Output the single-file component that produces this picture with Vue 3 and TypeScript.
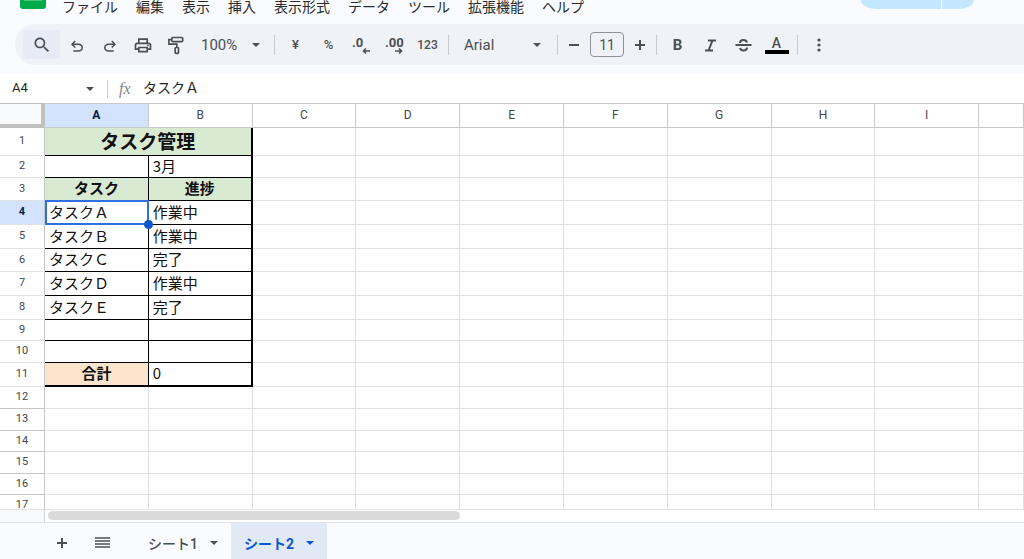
<script setup lang="ts">
import { ref } from 'vue'

interface SheetRow {
  height: number
  a?: string
  b?: string
  kind: 'title' | 'head' | 'body' | 'total' | 'plain'
}

const menus = ['ファイル', '編集', '表示', '挿入', '表示形式', 'データ', 'ツール', '拡張機能', 'ヘルプ']
const columns = ['A', 'B', 'C', 'D', 'E', 'F', 'G', 'H', 'I', '']

const rows: SheetRow[] = [
  { height: 28, a: 'タスク管理', kind: 'title' },
  { height: 22, b: '3月', kind: 'body' },
  { height: 23, a: 'タスク', b: '進捗', kind: 'head' },
  { height: 24, a: 'タスクＡ', b: '作業中', kind: 'body' },
  { height: 24, a: 'タスクＢ', b: '作業中', kind: 'body' },
  { height: 23, a: 'タスクＣ', b: '完了', kind: 'body' },
  { height: 24, a: 'タスクＤ', b: '作業中', kind: 'body' },
  { height: 24, a: 'タスクＥ', b: '完了', kind: 'body' },
  { height: 21, kind: 'body' },
  { height: 22, kind: 'body' },
  { height: 24, a: '合計', b: '0', kind: 'total' },
  { height: 22, kind: 'plain' },
  { height: 22, kind: 'plain' },
  { height: 21, kind: 'plain' },
  { height: 22, kind: 'plain' },
  { height: 21, kind: 'plain' },
  { height: 22, kind: 'plain' },
]

const selectedRow = 4
const cellName = ref('A4')
const formula = ref('タスクＡ')
const fontSize = ref('11')
</script>

<template>
  <div class="app">
    <header class="top">
      <div class="menubar">
        <div class="logo"><span class="logo-line"></span></div>
        <nav class="menus" aria-label="メニュー">
          <button v-for="m in menus" :key="m" type="button">{{ m }}</button>
        </nav>
        <div class="share">
          <button type="button" class="share-main" aria-label="共有"></button>
          <button type="button" class="share-more" aria-label="共有オプション"></button>
        </div>
      </div>

      <div class="toolbar" role="toolbar">
        <button type="button" class="search" aria-label="検索">
          <svg width="20" height="20" viewBox="0 0 24 24" fill="currentColor"><path d="M15.5 14h-.79l-.28-.27C15.41 12.59 16 11.11 16 9.5 16 5.91 13.09 3 9.5 3S3 5.91 3 9.5 5.91 16 9.5 16c1.61 0 3.09-.59 4.23-1.57l.27.28v.79l5 4.99L20.49 19l-4.99-5zm-6 0C7.01 14 5 11.99 5 9.5S7.01 5 9.5 5 14 7.01 14 9.5 11.99 14 9.5 14z" /></svg>
        </button>
        <button type="button" class="tool" aria-label="元に戻す">
          <svg width="18" height="18" viewBox="0 0 24 24" fill="currentColor"><path d="M7 21v-2h7.100q1.575 0 2.737-1T18 15.500t-1.163-2.500T14.100 12H7.800l2.600 2.600L9 16 4 11l5-5 1.400 1.400L7.800 10h6.300q2.425 0 4.163 1.575T20 15.500t-1.737 3.925T14.100 21z" /></svg>
        </button>
        <button type="button" class="tool" aria-label="やり直す">
          <svg width="18" height="18" viewBox="0 0 24 24" fill="currentColor"><path d="M17 21v-2H9.900q-1.575 0-2.737-1T6 15.500t1.163-2.500T9.900 12h6.300l-2.600 2.600L15 16l5-5-5-5-1.400 1.400L16.200 10H9.900q-2.425 0-4.163 1.575T4 15.500t1.737 3.925T9.900 21z" /></svg>
        </button>
        <button type="button" class="tool" aria-label="印刷">
          <svg width="20" height="20" viewBox="0 0 24 24" fill="currentColor"><path d="M19 9h-1V4H6v5H5c-1.660 0-3 1.340-3 3v6h4v3h12v-3h4v-6c0-1.660-1.340-3-3-3zM8 6h8v3H8V6zm8 13H8v-3h8v3zm2-3v-2H6v2H4v-4c0-.55.45-1 1-1h14c.55 0 1 .45 1 1v4h-2z" /><circle cx="18" cy="12.500" r="1" /></svg>
        </button>
        <button type="button" class="tool" aria-label="書式を貼り付け">
          <svg width="20" height="20" viewBox="0 0 24 24" fill="none" stroke="currentColor" stroke-width="2"><rect x="7" y="3" width="13" height="5" rx="1" /><path d="M7 5.500H3.500v5.500H13v4" /><rect x="11" y="15" width="4" height="7" rx="1" /></svg>
        </button>
        <label class="drop zoom">
          <select aria-label="ズーム"><option>100%</option></select>
          <svg width="8" height="4" viewBox="0 0 8 4"><path d="M0 0h8L4 4z" fill="currentColor" /></svg>
        </label>
        <span class="sep"></span>
        <button type="button" class="tool currency">¥</button>
        <button type="button" class="tool percent">%</button>
        <button type="button" class="tool" aria-label="小数点以下の桁数を減らす">
          <svg width="24" height="24" viewBox="0 0 24 24"><text x="2" y="14" class="dec">.0</text><path d="M20 18h-6M16 15.500L13.500 18l2.500 2.500" fill="none" stroke="currentColor" stroke-width="1.600" /></svg>
        </button>
        <button type="button" class="tool" aria-label="小数点以下の桁数を増やす">
          <svg width="24" height="24" viewBox="0 0 24 24"><text x="2" y="14" class="dec">.00</text><path d="M12 18h6M16 15.500l2.500 2.500-2.500 2.500" fill="none" stroke="currentColor" stroke-width="1.600" /></svg>
        </button>
        <button type="button" class="tool small">123</button>
        <span class="sep"></span>
        <label class="drop font">
          <select aria-label="フォント"><option>Arial</option></select>
          <svg width="8" height="4" viewBox="0 0 8 4"><path d="M0 0h8L4 4z" fill="currentColor" /></svg>
        </label>
        <span class="sep"></span>
        <button type="button" class="step" aria-label="フォントサイズを縮小">
          <svg width="12" height="12" viewBox="0 0 12 12"><path d="M1 6h10" stroke="currentColor" stroke-width="2" /></svg>
        </button>
        <input v-model="fontSize" class="size" type="text" aria-label="フォントサイズ" />
        <button type="button" class="step" aria-label="フォントサイズを拡大">
          <svg width="12" height="12" viewBox="0 0 12 12"><path d="M1 6h10M6 1v10" stroke="currentColor" stroke-width="2" /></svg>
        </button>
        <span class="sep"></span>
        <button type="button" class="tool bold">B</button>
        <button type="button" class="tool" aria-label="斜体">
          <svg width="18" height="18" viewBox="0 0 18 18" fill="none" stroke="currentColor" stroke-width="2"><path d="M6 4.500h8M3 14.500h8M10.500 4.500l-4 10" /></svg>
        </button>
        <button type="button" class="tool" aria-label="取り消し線">
          <svg width="18" height="18" viewBox="0 0 18 18" fill="none" stroke="currentColor" stroke-width="2"><path d="M.5 9h16M12 6.500C11.500 4.800 10.200 4 8.500 4 6.500 4 5 5 5 7M5 12c.5 1.800 1.800 2.500 3.500 2.500 2 0 3.500-1 3.500-3" /></svg>
        </button>
        <button type="button" class="tool color"><span>A</span><i></i></button>
        <span class="sep"></span>
        <button type="button" class="tool" aria-label="その他">
          <svg width="4" height="14" viewBox="0 0 4 14" fill="currentColor"><circle cx="2" cy="2" r="1.600" /><circle cx="2" cy="7" r="1.600" /><circle cx="2" cy="12" r="1.600" /></svg>
        </button>
      </div>
    </header>

    <div class="formula-bar">
      <input v-model="cellName" class="name-box" type="text" aria-label="名前ボックス" />
      <button type="button" class="name-drop" aria-label="名前付き範囲">
        <svg width="8" height="4" viewBox="0 0 8 4"><path d="M0 0h8L4 4z" fill="currentColor" /></svg>
      </button>
      <span class="bar-sep"></span>
      <label class="fx" for="formula">fx</label>
      <input id="formula" v-model="formula" class="formula" type="text" />
    </div>

    <main class="sheet">
      <table>
        <thead>
          <tr class="letters">
            <td class="corner"></td>
            <th v-for="c in columns" :key="c" scope="col" :class="{ active: c === 'A' }">{{ c }}</th>
          </tr>
        </thead>
        <tbody>
          <tr v-for="(row, i) in rows" :key="i" :class="row.kind" :style="{ height: row.height + 'px' }">
            <th scope="row" :class="{ active: i + 1 === selectedRow }">{{ i + 1 }}</th>
            <td v-if="row.kind === 'title'" class="b" colspan="2">{{ row.a }}</td>
            <template v-else>
              <td class="a">{{ row.a }}<span v-if="i + 1 === selectedRow" class="selection"><i></i></span></td>
              <td class="b">{{ row.b }}</td>
            </template>
            <td v-for="n in 8" :key="n"></td>
          </tr>
        </tbody>
      </table>
    </main>

    <div class="scroll-row">
      <div class="scroll-corner"></div>
      <div class="track"><div class="thumb"></div></div>
    </div>

    <footer class="tabs">
      <button type="button" class="tab-tool" aria-label="シートを追加">
        <svg width="12" height="12" viewBox="0 0 12 12"><path d="M1 6h10M6 1v10" stroke="currentColor" stroke-width="2" /></svg>
      </button>
      <button type="button" class="tab-tool" aria-label="すべてのシート">
        <svg width="15" height="11" viewBox="0 0 15 11"><path d="M0 1h15M0 4h15M0 7h15M0 10h15" stroke="currentColor" stroke-width="1.500" /></svg>
      </button>
      <button type="button" class="tab first">シート1
        <svg width="8" height="4" viewBox="0 0 8 4"><path d="M0 0h8L4 4z" fill="currentColor" /></svg>
      </button>
      <button type="button" class="tab current">シート2
        <svg width="8" height="4" viewBox="0 0 8 4"><path d="M0 0h8L4 4z" fill="currentColor" /></svg>
      </button>
    </footer>
  </div>
</template>

<style>
body {
  margin: 0;
}
</style>

<style scoped>
.app {
  display: flex;
  flex-direction: column;
  height: 100vh;
  overflow: hidden;
  background: #fff;
  color: #4c4f52;
  font-family: Roboto, "Noto Sans CJK JP", sans-serif;
}
.app * {
  box-sizing: border-box;
}
button,
input,
select {
  margin: 0;
  padding: 0;
  border: 0;
  background: none;
  color: inherit;
  font: inherit;
  outline: none;
}
.top {
  flex: none;
  padding-bottom: 9px;
  background: #f9fbfe;
}
.menubar {
  display: flex;
  align-items: flex-start;
  height: 24px;
  padding: 0 50px 0 20px;
}
.logo {
  width: 26px;
  height: 9px;
  border-radius: 0 0 3px 3px;
  background: #00ac47;
}
.logo-line {
  display: block;
  width: 18px;
  height: 1px;
  margin: 0 auto;
  background: #4cc27c;
}
.menus {
  display: flex;
  gap: 18px;
  margin: -4px 0 0 16px;
}
.menus button {
  height: 20px;
  font: 14px/20px "Noto Sans CJK JP", sans-serif;
  color: #2b2b2b;
  white-space: nowrap;
}
.share {
  display: flex;
  gap: 1px;
  height: 9px;
  margin-left: auto;
}
.share button {
  height: 9px;
  background: #c2e7ff;
}
.share-main {
  width: 80px;
  border-radius: 0 0 0 20px / 0 0 0 12px;
}
.share-more {
  width: 32px;
  border-radius: 0 0 20px 0 / 0 0 12px 0;
}
.toolbar {
  display: flex;
  align-items: center;
  height: 41px;
  margin-left: 15px;
  padding-left: 8px;
  border-radius: 20px 0 0 20px;
  background: #eff2f7;
}
.toolbar svg {
  flex: none;
}
.search {
  display: flex;
  align-items: center;
  justify-content: center;
  width: 37px;
  height: 29px;
  background: #e7ebf5;
}
.tool {
  display: flex;
  align-items: center;
  justify-content: center;
  width: 33px;
  height: 30px;
}
.small {
  font-size: 12px;
  font-weight: 500;
}
.currency,
.percent {
  font-size: 13px;
  font-weight: 500;
}
.dec {
  fill: currentColor;
  font-size: 13px;
  font-weight: 700;
}
.bold {
  font-size: 15px;
  font-weight: 700;
}
.color {
  flex-direction: column;
  font-size: 14px;
  font-weight: 500;
  line-height: 14px;
}
.color i {
  width: 24px;
  height: 4px;
  background: #000;
}
.sep {
  width: 1px;
  height: 20px;
  margin: 0 4px;
  background: #c9ccd0;
}
.drop {
  display: grid;
  align-items: center;
  font-size: 15px;
  font-weight: 400;
}
.drop select,
.drop svg {
  grid-area: 1 / 1;
}
.drop select {
  appearance: none;
  width: 100%;
  height: 28px;
}
.drop svg {
  justify-self: end;
  pointer-events: none;
}
.zoom {
  width: 78px;
  padding: 0 10px 0 9px;
}
.font {
  width: 100px;
  padding: 0 12px 0 11px;
}
.step {
  display: flex;
  align-items: center;
  justify-content: center;
  width: 24px;
  height: 24px;
}
.size {
  width: 34px;
  height: 25px;
  margin: 0 4px;
  border: 1px solid #8f9296;
  border-radius: 4px;
  font-size: 14px;
  text-align: center;
}
.formula-bar {
  display: flex;
  flex: none;
  align-items: center;
  height: 29px;
  padding-left: 12px;
}
.name-box {
  width: 68px;
  height: 20px;
  padding-bottom: 2px;
  font-size: 13px;
  color: #1f1f1f;
}
.name-drop {
  display: flex;
  align-items: center;
  justify-content: center;
  width: 20px;
  height: 20px;
}
.bar-sep {
  width: 1px;
  height: 18px;
  margin: 0 11px 0 7px;
  background: #c9ccd0;
}
.fx {
  width: 24px;
  font: italic 16px/20px "Liberation Serif", serif;
  color: #80868b;
}
.formula {
  flex: 1;
  height: 24px;
  padding-bottom: 4px;
  font: 14px/20px "Noto Sans CJK JP", sans-serif;
  color: #1f1f1f;
}
.sheet {
  flex: 1 1 0;
  min-height: 0;
  overflow: hidden;
}
table,
thead,
tbody {
  display: block;
}
tr {
  display: grid;
  grid-template-columns: 45px repeat(9, 104fr) 45fr;
}
th,
td {
  display: flex;
  align-items: center;
  min-width: 0;
  padding: 0;
  border-right: 1px solid #e1e1e1;
  border-bottom: 1px solid #e1e1e1;
  white-space: nowrap;
}
th {
  justify-content: center;
  padding-bottom: 1px;
  border-right-color: #c4c7c5;
  font-size: 11px;
  font-weight: 400;
  line-height: 14px;
  color: #44474a;
}
.plain th {
  border-bottom-color: #c4c7c5;
}
td {
  padding-bottom: 2px;
  font: 15px/18px "Noto Sans CJK JP", sans-serif;
  color: #111;
}
.letters {
  height: 25px;
}
.letters th {
  border-top: 1px solid #c9c9c9;
  border-bottom-color: #c9c9c9;
  border-right-color: #c9c9c9;
  font-size: 12px;
}
.letters .corner {
  border: solid #c0c0c0;
  border-width: 1px 4px 4px 0;
  background: #f8f9fa;
}
th.active,
.letters th.active {
  background: #d3e3fd;
  color: #041e49;
  font-weight: 700;
}
tr:not(.plain) .a,
tr:not(.plain) .b {
  border-bottom-color: #000;
}
.body .a,
.body .b,
.total .b {
  padding-left: 4px;
}
tr:not(.plain) .a {
  border-right-color: #000;
}
tr:not(.plain) .b {
  border-right: 2px solid #000;
}
.title .b,
.head .a,
.head .b,
.total .a {
  justify-content: center;
  background: #d9ead3;
  font-weight: 700;
}
.title .b {
  grid-column: span 2;
  font-size: 19px;
}
.total .a {
  background: #fce5cd;
}
tr.total .a,
tr.total .b {
  border-bottom-width: 2px;
}
.a {
  position: relative;
}
.selection {
  position: absolute;
  inset: -1px -1px -1px 0;
  border: 2px solid #2f6fe4;
}
.selection i {
  position: absolute;
  right: -6px;
  bottom: -6px;
  z-index: 1;
  width: 9px;
  height: 9px;
  border-radius: 50%;
  background: #0b57d0;
}
.scroll-row {
  display: flex;
  flex: none;
  height: 13px;
  border-top: 1px solid #e1e1e1;
}
.scroll-corner {
  width: 45px;
  border-right: 1px solid #d5d5d5;
  background: #f8f9fa;
}
.track {
  flex: 1;
  padding: 1px 3px;
}
.thumb {
  width: calc(100% * 11 / 26);
  height: 9px;
  border-radius: 5px;
  background: #dadada;
}
.tabs {
  display: flex;
  flex: none;
  align-items: center;
  height: 37px;
  padding-left: 41px;
  border-top: 1px solid #e1e3e6;
  background: #f9fbfe;
}
.tab-tool {
  display: flex;
  align-items: center;
  justify-content: center;
  width: 41px;
  height: 34px;
  padding-top: 3px;
}
.tab {
  display: flex;
  align-items: center;
  gap: 12px;
  height: 36px;
  padding: 3px 13px 0;
  font-size: 14px;
  font-weight: 500;
}
.first {
  margin-left: 12px;
}
.current {
  background: #e1e9f7;
  color: #0b57d0;
  font-weight: 700;
}
</style>
